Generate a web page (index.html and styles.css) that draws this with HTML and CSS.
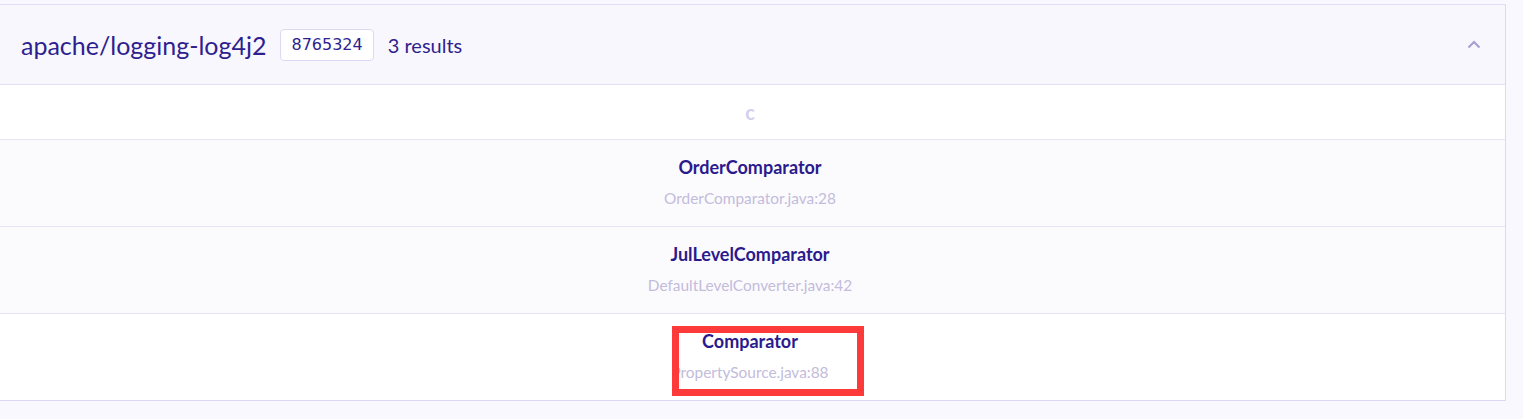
FILE: index.html
```html
<!DOCTYPE html>
<html>
<head>
<meta charset="utf-8">
<link rel="stylesheet" href="styles.css">
</head>
<body>
<div class="card">
  <div class="header">
    <span class="repo">apache/logging-log4j2</span>
    <span class="badge">8765324</span>
    <span class="count">3 results</span>
    <span class="spacer"></span>
    <svg class="chev" width="14" height="9" viewBox="0 0 14 9"><polyline points="1.5,7.5 7,2 12.5,7.5" fill="none" stroke="#a59ed3" stroke-width="2"/></svg>
  </div>
  <div class="group">c</div>
  <div class="row tint">
    <div class="name">OrderComparator</div>
    <div class="file">OrderComparator.java:28</div>
  </div>
  <div class="row tint">
    <div class="name">JulLevelComparator</div>
    <div class="file">DefaultLevelConverter.java:42</div>
  </div>
  <div class="row last">
    <div class="name">Comparator</div>
    <div class="file">PropertySource.java:88</div>
    <div class="highlight"></div>
  </div>
</div>
</body>
</html>
```
FILE: styles.css
```css
html, body {
  margin: 0;
  padding: 0;
  background: #f9f8ff;
  font-family: Lato, "Noto Sans", sans-serif;
  overflow: hidden;
}
.card {
  margin-top: 4px;
  margin-left: -6px;
  width: 1510px;
  border: 1px solid #dcd7f7;
  border-top-color: #e2defa;
  background: #fff;
}
.header {
  height: 79px;
  display: flex;
  align-items: center;
  padding-left: 26px;
  padding-right: 24px;
  background: #f8f7fe;
  border-bottom: 1px solid #e4e1f6;
}
.repo {
  font-size: 25px;
  color: #2f1f8e;
}
.badge {
  margin-left: 14px;
  height: 32px;
  box-sizing: border-box;
  padding: 0 10px;
  display: flex;
  align-items: center;
  background: #fff;
  border: 1px solid #ddd9f5;
  border-radius: 4px;
  font-family: "DejaVu Sans", sans-serif;
  font-size: 16px;
  color: #2f1f8e;
}
.count {
  margin-left: 14px;
  font-size: 20px;
  color: #2f1f8e;
}
.spacer { flex: 1; }
.chev { display: block; }
.group {
  height: 54px;
  display: flex;
  align-items: center;
  justify-content: center;
  font-size: 20px;
  font-weight: bold;
  color: #d4cfee;
  border-bottom: 1px solid #e7e4f4;
  background: #fff;
}
.row {
  position: relative;
  height: 87px;
  box-sizing: border-box;
  padding-top: 17px;
  text-align: center;
  border-bottom: 1px solid #e7e4f4;
  background: #fff;
}
.row.tint { background: #fbfbfe; }
.row.last { border-bottom: none; height: 86px; }
.name {
  font-size: 18px;
  line-height: 20px;
  font-weight: bold;
  color: #2b1a8c;
}
.file {
  margin-top: 11px;
  font-size: 15.4px;
  line-height: 20px;
  color: #c3bcdb;
}
.highlight {
  position: absolute;
  left: 677px;
  top: 12px;
  width: 178px;
  height: 56px;
  border: 7px solid #fc3a3a;
}
```
